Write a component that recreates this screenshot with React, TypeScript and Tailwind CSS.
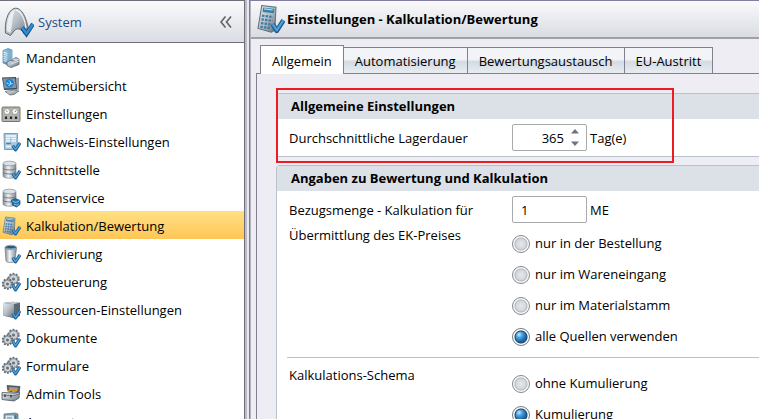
import { useState } from "react"
import type { ReactNode } from "react"

function Gradients() {
  return (
    <svg className="absolute h-0 w-0" aria-hidden="true">
      <defs>
        <linearGradient id="steel" x1="0" y1="0" x2="1" y2="1">
          <stop offset="0" stopColor="#e9edf0" />
          <stop offset="0.5" stopColor="#b3bcc4" />
          <stop offset="1" stopColor="#65707b" />
        </linearGradient>
        <linearGradient id="cylinder" x1="0" y1="0" x2="1" y2="0">
          <stop offset="0" stopColor="#828b94" />
          <stop offset="0.4" stopColor="#f2f4f6" />
          <stop offset="1" stopColor="#7c868f" />
        </linearGradient>
        <linearGradient id="blue" x1="0" y1="0" x2="1" y2="1">
          <stop offset="0" stopColor="#a4d3ee" />
          <stop offset="1" stopColor="#3276ac" />
        </linearGradient>
      </defs>
    </svg>
  )
}

function Icon({ children }: { children: ReactNode }) {
  return (
    <svg viewBox="0 0 20 20" className="h-5 w-5 shrink-0" aria-hidden="true">
      {children}
    </svg>
  )
}

function Check() {
  return (
    <g fill="none" strokeLinejoin="round">
      <path d="M11.800 13.500l2.700 4.300L19 10.800" stroke="#1d5a8e" strokeWidth="3.200" />
      <path d="M11.800 13.500l2.700 4L19 10.800" stroke="#4a9fdb" strokeWidth="1.500" />
    </g>
  )
}

function ServerIcon() {
  return (
    <Icon>
      <path d="M2 2.500l5-2 4 1.500v13L7 17l-5-2z" fill="url(#blue)" stroke="#4a80a8" strokeWidth=".7" />
      <path d="M7 3V17l4-2.500V2z" fill="#7fb0d0" />
      <path d="M2.600 4.500l4 .8M2.600 6.500l4 .8M2.600 8.500l4 .8M2.600 10.500l4 .8M2.600 12.500l4 .8" stroke="#f1faff" strokeWidth=".9" />
      <path d="M6 14l4-2 2 1v-2l3-1.500 3 1.500v5.500l-8 3-4-2z" fill="url(#steel)" stroke="#55636f" strokeWidth=".8" />
      <path d="M12 11l3 1.300 3-1.300M10 16l8-3" stroke="#f5f7f9" strokeWidth=".7" fill="none" />
    </Icon>
  )
}

function MonitorIcon() {
  return (
    <Icon>
      <path d="M1 1.500l14-.5 1.500 12.500-13.500.500z" fill="#3f4954" />
      <path d="M2 2.600l12-.4 1.200 9.800-11.700.600z" fill="#8495a4" />
      <circle cx="8.500" cy="7.300" r="4.200" fill="#1682d1" />
      <path d="M8 4.500l1.500 1.500-.500 3-1.500.500M5.500 7l2 .5M10 8l1.500-.5" stroke="#cdecff" fill="none" />
      <path d="M15 2l3-.500v12l-2 .5z" fill="#98a1a9" />
      <path d="M4 15.500l9-1.500 5 1-5 3.500-4 .5z" fill="url(#steel)" stroke="#5b646d" strokeWidth=".7" />
    </Icon>
  )
}

function PanelIcon() {
  return (
    <Icon>
      <rect x="1" y="3" width="18" height="14.500" rx="1" fill="#b4b4af" stroke="#767873" />
      <circle cx="6" cy="7.500" r="3" fill="#f7f7f5" stroke="#888982" strokeWidth=".7" />
      <circle cx="14" cy="7.500" r="3" fill="#f7f7f5" stroke="#888982" strokeWidth=".7" />
      <path d="M5 6.500L6.500 8M14 8l1.200-1.800" stroke="#735b54" strokeWidth=".8" />
      <path d="M5 12.500V15M10 12.500V15M15 12.500V15" stroke="#262724" strokeWidth="2.200" />
    </Icon>
  )
}

function FormIcon() {
  return (
    <Icon>
      <path d="M3 1.500h13.500l-.500 16H3.500z" fill="#a6cbe1" stroke="#6689a0" strokeWidth=".8" />
      <path d="M5 4h10M5 6.500h4M10.500 6.500H15M5 9h4M10.500 9H15M5 14.500h5" stroke="#f6fbfe" strokeWidth="1.300" />
      <path d="M5 11.500h5" stroke="#4f85a8" strokeWidth="1.300" />
      <Check />
    </Icon>
  )
}

function Cylinder() {
  return (
    <g stroke="#727c85" strokeWidth=".6">
      <path d="M2 4v12c0 3 13 3 13 0V4z" fill="url(#cylinder)" />
      <ellipse cx="8.500" cy="3.500" rx="6.500" ry="2.300" fill="#dce1e5" />
      <path d="M2 8c0 2.600 13 2.600 13 0M2 12c0 2.600 13 2.600 13 0" fill="none" strokeWidth="1" />
    </g>
  )
}

function DatabaseIcon() {
  return (
    <Icon>
      <Cylinder />
      <Check />
    </Icon>
  )
}

function DataServiceIcon() {
  return (
    <Icon>
      <Cylinder />
      <path d="M10.500 12l4-1.500 4.500 2v4l-3.500 2.500-4-2z" fill="#216fa9" stroke="#164b77" strokeWidth=".7" />
      <path d="M11.500 13l3.500 1.500 3.500-1.800M13 16l3 1.200 2-1.500" stroke="#8ac9ee" fill="none" />
    </Icon>
  )
}

function CalculatorIcon({ className = "h-5 w-5" }: { className?: string }) {
  return (
    <svg viewBox="0 0 20 20" className={className + " shrink-0"} aria-hidden="true">
      <path d="M4.500 1l9.500 1.200-.8 15.300-2.400 1.300L2 16.300z" fill="url(#steel)" stroke="#5d707e" strokeWidth=".7" />
      <path d="M5.400 2.300l7.500 1-.3 2.800-7.500-.8z" fill="#3580ad" />
      <path d="M6 3.200l5.800.8" stroke="#bce2ef" strokeWidth=".8" />
      <path d="M4.700 7.800l7.300.9M4.300 10.300l7.400.9M4 12.800l7.400.9M3.600 15.200l6.400.8" stroke="#3c7ca4" strokeWidth="1.500" strokeDasharray="1.600 .8" />
      <Check />
    </svg>
  )
}

function ArchiveIcon() {
  return (
    <Icon>
      <path d="M4 4l1 13c1 2 8 2 9 0l1.500-13z" fill="url(#cylinder)" stroke="#6f7d88" strokeWidth=".7" />
      <ellipse cx="9.800" cy="3.500" rx="5.800" ry="2.200" fill="#3d5262" stroke="#9aadb9" />
      <path d="M6 4c2 1.300 6 1.300 8 0" stroke="#63b8e8" fill="none" />
      <Check />
    </Icon>
  )
}

function GearsIcon() {
  return (
    <Icon>
      <circle cx="12.500" cy="7" r="5.200" fill="#a5adb5" stroke="#69727b" strokeWidth="2" strokeDasharray="2 1.270" />
      <circle cx="12.500" cy="7" r="4.200" fill="#cdd3d8" stroke="#848e97" strokeWidth=".8" />
      <circle cx="12.500" cy="7" r="1.600" fill="#69747e" />
      <circle cx="6.500" cy="12" r="4.700" fill="#b4bbc2" stroke="#5b656f" strokeWidth="2" strokeDasharray="1.800 1.150" />
      <circle cx="6.500" cy="12" r="3.700" fill="#d5dadd" stroke="#7b858e" strokeWidth=".8" />
      <circle cx="6.500" cy="12" r="1.500" fill="#626d77" />
      <Check />
    </Icon>
  )
}

function CubeIcon() {
  return (
    <Icon>
      <path d="M2 3l10-1.200 7 1V16l-7 2-9.500-2.300z" fill="#5c6873" />
      <path d="M2 3l11 1v13.500L2.500 15.500z" fill="url(#steel)" />
      <path d="M2 3l10-1.200 7 1L13 4z" fill="#c9d0d6" />
      <Check />
    </Icon>
  )
}

function ToolboxIcon() {
  return (
    <Icon>
      <path d="M6 1.500l13 1-1 6-11-1z" fill="#5b6269" stroke="#3f454b" strokeWidth=".7" />
      <path d="M8 3l9 .8-.5 3-8-.8z" fill="#989ea4" />
      <path d="M7 7.500l4-2.500 1 2.500 4-1" stroke="#dc9a28" strokeWidth="1.600" fill="none" />
      <path d="M1 8.500l13 .5 4.500-1-.5 6-5 3L1 15.500z" fill="url(#steel)" stroke="#4b545c" strokeWidth=".8" />
      <path d="M1 11l12 .8 5.500-2" stroke="#59636c" strokeWidth=".8" fill="none" />
      <path d="M4 10.500V13M10 11v2.500" stroke="#363d43" strokeWidth="1.500" />
    </Icon>
  )
}

function AccountIcon() {
  return (
    <Icon>
      <path d="M3 2l11-1 3 1v15H3z" fill="#7b97aa" stroke="#5d7382" strokeWidth=".7" />
      <path d="M4.500 3.500H13V15H4.500z" fill="#d7e6ef" />
      <path d="M6 6h5M6 9h5" stroke="#60889f" />
      <path d="M14.500 3v6" stroke="#2c7cb8" strokeWidth="1.500" />
    </Icon>
  )
}

function SystemLogo() {
  return (
    <svg viewBox="0 0 30 32" className="h-8 w-[30px] shrink-0" aria-hidden="true">
      <path
        d="M1.500 27C.5 18 3 5 10 2.500c8-2.500 13.500 12 14.500 22.500l-4.500 3c-2-5-7-7-10-3l-3.500 4.500z"
        fill="url(#steel)"
        stroke="#5e6974"
      />
      <path d="M3 25C2.500 16 5 6 11 3.500 8 10 9 17 6.500 27z" fill="#f8fafb" opacity=".75" />
      <path d="M12 4c5 1 9 9 10 18" stroke="#eef1f3" strokeWidth="1.300" fill="none" />
      <path d="M18 21.500l4.500 6.500L29 18" fill="none" stroke="#174f83" strokeWidth="4.200" />
      <path d="M18 21.500l4.500 6L29 18" fill="none" stroke="#2e90da" strokeWidth="2.400" />
    </svg>
  )
}

const navItems = [
  { label: "Mandanten", icon: <ServerIcon /> },
  { label: "Systemübersicht", icon: <MonitorIcon /> },
  { label: "Einstellungen", icon: <PanelIcon /> },
  { label: "Nachweis-Einstellungen", icon: <FormIcon /> },
  { label: "Schnittstelle", icon: <DatabaseIcon /> },
  { label: "Datenservice", icon: <DataServiceIcon /> },
  { label: "Kalkulation/Bewertung", icon: <CalculatorIcon />, active: true },
  { label: "Archivierung", icon: <ArchiveIcon /> },
  { label: "Jobsteuerung", icon: <GearsIcon /> },
  { label: "Ressourcen-Einstellungen", icon: <CubeIcon /> },
  { label: "Dokumente", icon: <GearsIcon /> },
  { label: "Formulare", icon: <GearsIcon /> },
  { label: "Admin Tools", icon: <ToolboxIcon /> },
  { label: "Account", icon: <AccountIcon /> },
]

const tabs = ["Allgemein", "Automatisierung", "Bewertungsaustausch", "EU-Austritt"]

const sources = ["nur in der Bestellung", "nur im Wareneingang", "nur im Materialstamm", "alle Quellen verwenden"]

const schemas = ["ohne Kumulierung", "Kumulierung"]

function Sidebar() {
  return (
    <aside className="w-[245px] shrink-0 border-t border-r border-[#6f6f78] bg-white">
      <div className="flex h-[42px] items-center border-b border-[#6f6f78] bg-linear-to-b from-[#fafafb] to-[#dadde3] pr-3 pl-1">
        <SystemLogo />
        <h2 className="ml-1 pt-0.5 text-[#1c4d86]">System</h2>
        <button type="button" aria-label="Navigation einklappen" className="ml-auto">
          <svg viewBox="0 0 12 12" className="h-3 w-3" fill="none" stroke="#626268" strokeWidth="1.600">
            <path d="M5.500 .5L1 6l4.500 5.500M11 .5L6.500 6l4.500 5.500" />
          </svg>
        </button>
      </div>
      <nav>
        {navItems.map((item) => (
          <a
            key={item.label}
            href="#"
            aria-current={item.active ? "page" : undefined}
            className={
              item.active
                ? "flex h-7 items-center gap-[5px] bg-linear-to-b from-[#ffe182] to-[#ffc657] pt-0.5 pl-px"
                : "flex h-7 items-center gap-[5px] pt-0.5 pl-px"
            }
          >
            {item.icon}
            <span className="pt-0.5">{item.label}</span>
          </a>
        ))}
      </nav>
    </aside>
  )
}

function Group({ title, children }: { title: string; children: ReactNode }) {
  return (
    <section className="rounded-tl-sm border border-r-0 border-[#b9c1cb] bg-white">
      <h2 className="h-[25px] bg-[#dce1e8] pl-3.5 leading-[25px] font-bold">{title}</h2>
      {children}
    </section>
  )
}

function RadioList({ name, options, initial }: { name: string; options: string[]; initial: string }) {
  const [value, setValue] = useState(initial)

  return (
    <>
      {options.map((option) => (
        <label key={option} className="flex h-[31px] items-center gap-[5px]">
          <input
            type="radio"
            name={name}
            checked={value === option}
            onChange={() => setValue(option)}
            className="h-[18px] w-[18px] appearance-none rounded-full border border-[#85898e] bg-[radial-gradient(circle,#e6e8ec_0,#d3d6db_5px,#b4b8be_6px,#f7f8f9_7px)] checked:border-[#747b83] checked:bg-[radial-gradient(circle,transparent_5px,#1d4467_6px,#ffffff_7px),radial-gradient(circle_at_38%_35%,#c5e8ff_0,#4da3e2_3px,#1765a8_7px)]"
          />
          {option}
        </label>
      ))}
    </>
  )
}

function DurationField() {
  const [days, setDays] = useState(365)

  return (
    <div className="flex h-[27px] w-[75px] items-center rounded-xs border border-[#a9a9ae] bg-white">
      <input
        id="duration"
        value={days}
        onChange={(e) => setDays(Number(e.target.value) || 0)}
        className="w-full min-w-0 bg-transparent pt-0.5 text-right outline-none"
      />
      <div className="flex h-full w-[22px] shrink-0 flex-col items-center justify-between py-1">
        <button type="button" aria-label="Erhöhen" onClick={() => setDays(days + 1)}>
          <svg viewBox="0 0 8 5" className="h-[5px] w-2" fill="#70757b">
            <path d="M4 0l4 4.500H0z" />
          </svg>
        </button>
        <button type="button" aria-label="Verringern" onClick={() => setDays(days - 1)}>
          <svg viewBox="0 0 8 5" className="h-[5px] w-2" fill="#70757b">
            <path d="M4 5L0 .5h8z" />
          </svg>
        </button>
      </div>
    </div>
  )
}

export default function App() {
  return (
    <div className="flex h-screen overflow-hidden bg-[#eeedf4] font-['Open_Sans','Noto_Sans',sans-serif] text-[13px] text-black">
      <Gradients />
      <Sidebar />
      <div className="w-1 shrink-0 border-l-2 border-[#bdbdc5] bg-[#e9e8f1]" />

      <main className="min-w-0 flex-1 border-t border-l border-[#847ba0] bg-[#eeedf4]">
        <div className="min-h-full border-l border-[#b5b3c0]">
          <header className="flex h-[38px] items-center gap-0.5 border-b-2 border-[#a0a0a6] bg-linear-to-b from-[#fafafc] to-[#d9dce2] pl-1">
            <CalculatorIcon className="h-8 w-[30px]" />
            <h1 className="pt-0.5 font-bold">Einstellungen - Kalkulation/Bewertung</h1>
          </header>

          <div role="tablist" className="flex items-end pt-1.5 pl-[9px]">
            {tabs.map((tab, index) => (
              <button
                key={tab}
                type="button"
                role="tab"
                aria-selected={index === 0}
                className={
                  index === 0
                    ? "relative -mb-px h-[29px] border border-b-0 border-[#7f828e] bg-white px-[11px] pt-1"
                    : "h-[26px] border-t border-r border-[#7f828e] bg-linear-to-b from-[#f3f4f7] from-45% via-[#d3dbe3] via-55% to-[#e9edf1] px-[11px] pt-0.5"
                }
              >
                {tab}
              </button>
            ))}
          </div>

          <div className="ml-[5px] flex flex-col gap-2 border-t border-l border-[#7f828e] pt-[19px] pl-[19px]">
            <div className="relative">
              <Group title="Allgemeine Einstellungen">
                <div className="flex items-center py-[5px] pl-3">
                  <label htmlFor="duration" className="w-[223px] shrink-0 pt-0.5">
                    Durchschnittliche Lagerdauer
                  </label>
                  <DurationField />
                  <span className="ml-[3px] pt-0.5">Tag(e)</span>
                </div>
              </Group>
              <div className="pointer-events-none absolute -top-[5px] -bottom-1.5 left-0 w-[398px] border-2 border-[#ed1c24]" />
            </div>

            <Group title="Angaben zu Bewertung und Kalkulation">
              <div className="ml-2.5 flex py-[5px] pl-0.5">
                <label htmlFor="quantity" className="w-[223px] shrink-0 pt-0.5 pr-6 leading-[25px]">
                  Bezugsmenge - Kalkulation für Übermittlung des EK-Preises
                </label>
                <div>
                  <div className="mb-[5px] flex items-center gap-[3px]">
                    <input
                      id="quantity"
                      defaultValue="1"
                      className="h-[27px] w-[75px] rounded-xs border border-[#a9a9ae] bg-white px-2 outline-none"
                    />
                    <span className="pt-0.5">ME</span>
                  </div>
                  <RadioList name="source" options={sources} initial="alle Quellen verwenden" />
                </div>
              </div>
              <div className="ml-2.5 flex border-t border-[#b9c1cb] py-[5px] pl-0.5">
                <span className="w-[223px] shrink-0 leading-[25px]">Kalkulations-Schema</span>
                <div className="pt-[5px]">
                  <RadioList name="schema" options={schemas} initial="Kumulierung" />
                </div>
              </div>
            </Group>
          </div>
        </div>
      </main>
    </div>
  )
}
